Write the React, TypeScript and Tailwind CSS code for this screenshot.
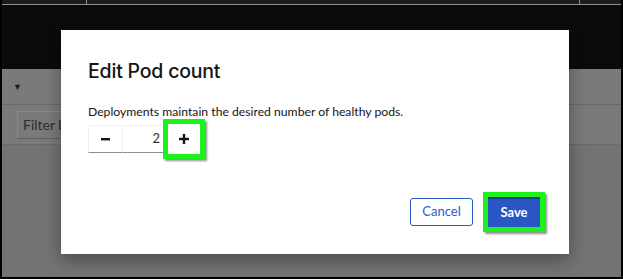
import React from 'react';

const font = { fontFamily: 'Lato, "Liberation Sans", sans-serif' };

const MinusIcon = () => (
  <svg width="9" height="3" viewBox="0 0 9 3" className="block">
    <rect x="0" y="0" width="9" height="2.4" fill="#151515" />
  </svg>
);

const PlusIcon = () => (
  <svg width="10" height="10" viewBox="0 0 10 10" className="block">
    <rect x="0" y="3.8" width="10" height="2.4" fill="#151515" />
    <rect x="3.8" y="0" width="2.4" height="10" fill="#151515" />
  </svg>
);

const App = () => {
  return (
    <div className="relative w-[623px] h-[279px] bg-black px-[2px] pb-[2px] overflow-hidden" style={font}>
      <div className="flex flex-col h-full">
        {/* masthead strip */}
        <div className="relative h-[5px] bg-[#1c1c1c] border-b border-[#8e8e8e]">
          <div className="absolute left-[84px] top-0 w-px h-[5px] bg-[#8e8e8e]" />
          <div className="absolute left-[577px] top-0 w-px h-[5px] bg-[#8e8e8e]" />
        </div>
        <div className="h-[64px] bg-[#0b0b0b]" />

        {/* page content behind backdrop */}
        <div className="flex-1 flex flex-col bg-[#7a7a7a]">
          <div className="h-[36px] flex items-center border-b border-[#6a6a6a] pl-[11px]">
            <span className="text-[9px] text-[#1a1a1a] leading-none">▼</span>
            <span className="ml-[40px] w-[3px] h-[3px] bg-[#1a1a1a]" />
          </div>
          <div className="h-[40px] flex items-center border-b border-[#6a6a6a] pl-[15px]">
            <div className="w-[100px] h-[28px] flex items-center pl-[5px] border border-[#8a8a8a] border-b-[#5e5e5e] text-[14px] text-[#2c2c2c] whitespace-nowrap">
              Filter by
            </div>
          </div>
          <div className="flex-1 bg-[#737373]" />
        </div>
      </div>

      {/* modal */}
      <div className="absolute left-[61px] top-[30px] w-[508px] h-[224px] bg-white shadow-[0_6px_16px_rgba(0,0,0,0.35)] flex flex-col pl-[27px] pr-[24px]">
        <h1
          className="mt-[29px] text-[19.5px] leading-[24px] font-medium text-[#151515] tracking-[-0.2px]"
          style={{ fontFamily: 'Inter, "Liberation Sans", sans-serif' }}
        >
          Edit Pod count
        </h1>
        <p className="mt-[20px] text-[12.2px] leading-[18px] text-[#151515]">
          Deployments maintain the desired number of healthy pods.
        </p>
        <div className="mt-[4px] flex items-center">
          <button className="w-[35px] h-[28px] flex items-center justify-center bg-white border border-[#f0f0f0] border-b-[#8a8d90]">
            <MinusIcon />
          </button>
          <div className="w-[41px] h-[28px] flex items-center justify-end pr-[3px] border border-l-0 border-[#f0f0f0] border-b-[#8a8d90] text-[13px] text-[#333]">
            2
          </div>
          <div className="-my-[6px] -ml-px border-[5px] border-[#1cf21c] shadow-[2px_2px_2px_rgba(0,0,0,0.45)]">
            <button className="w-[32px] h-[30px] flex items-center justify-center bg-white">
              <PlusIcon />
            </button>
          </div>
        </div>

        <div className="mt-auto mb-[22px] flex items-center justify-end">
          <button className="w-[63px] h-[28px] rounded-[3px] border border-[#2b5bc7] text-[#2b5bc7] text-[13px]">
            Cancel
          </button>
          <div className="ml-[10px] border-[5px] border-[#1cf21c] shadow-[2px_2px_2px_rgba(0,0,0,0.45)]">
            <button className="w-[52px] h-[30px] bg-[#2a56c6] border-t-2 border-[#1d3c8c] text-white text-[13px] font-bold">
              Save
            </button>
          </div>
        </div>
      </div>
    </div>
  );
};

export default App;
